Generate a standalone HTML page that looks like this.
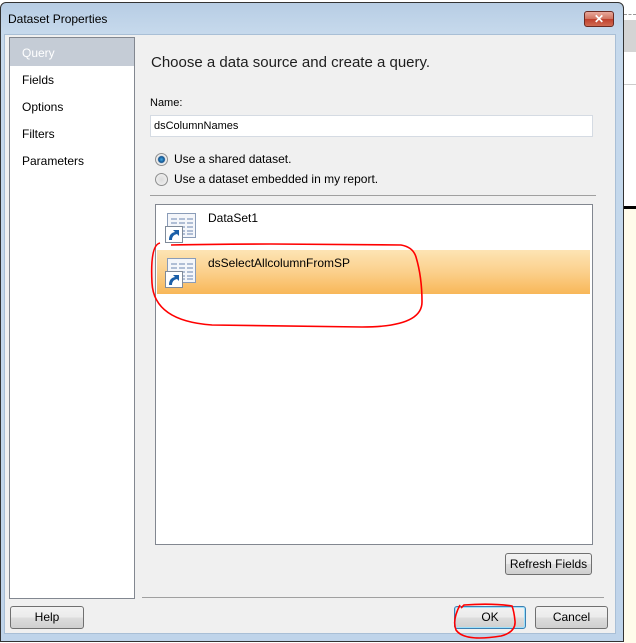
<!DOCTYPE html>
<html><head><style>
*{margin:0;padding:0;box-sizing:border-box}
body{width:636px;height:643px;overflow:hidden;background:#fff;font-family:"Liberation Sans",sans-serif;font-size:12px;color:#000;position:relative}
.a{position:absolute}
.btn{position:absolute;border:1px solid #707070;border-radius:3px;background:linear-gradient(#f2f2f2,#ebebeb 50%,#dddddd 51%,#cfcfcf);text-align:center;font-size:12px;line-height:20px}
</style></head><body>
<div class="a" style="left:624px;top:0;width:12px;height:643px;background:#fff"></div>
<div class="a" style="left:624px;top:14px;width:12px;height:1px;border-top:1px dashed #999"></div>
<div class="a" style="left:624px;top:20px;width:12px;height:32px;background:#d4d4d4"></div>
<div class="a" style="left:624px;top:84px;width:12px;height:1px;background:#ccc"></div>
<div class="a" style="left:624px;top:206px;width:12px;height:3px;background:#000"></div>
<div class="a" style="left:624px;top:209px;width:12px;height:434px;background:#fffbea"></div>
<div class="a" style="left:0;top:2px;width:624px;height:640px;background:linear-gradient(#b7cde4,#c6d9ec 30px,#bfd4ea);border:1px solid #333;border-radius:6px 6px 0 0"></div>
<div class="a" style="left:8px;top:12px;font-size:12px;color:#000">Dataset Properties</div>
<div class="a" style="left:584px;top:11px;width:30px;height:16px;border:1px solid #6b2a22;border-radius:3px;background:linear-gradient(#e9a99c,#d0725f 50%,#c0402c 51%,#cf6a52);color:#fff;font-size:12px;font-weight:bold;text-align:center;line-height:14px">✕</div>
<div class="a" style="left:4px;top:34px;width:612px;height:600px;background:#f0f0f0;border:1px solid #a9bfd6"></div>
<div class="a" style="left:9px;top:37px;width:126px;height:562px;background:#fff;border:1px solid #828790"></div>
<div class="a" style="left:10px;top:38px;width:124px;height:28px;background:#c5ccd6"></div>
<div class="a" style="left:22px;top:46px;color:#fff">Query</div>
<div class="a" style="left:22px;top:73px">Fields</div>
<div class="a" style="left:22px;top:100px">Options</div>
<div class="a" style="left:22px;top:127px">Filters</div>
<div class="a" style="left:22px;top:154px">Parameters</div>
<div class="a" style="left:151px;top:54px;font-size:15px;color:#1e1e1e">Choose a data source and create a query.</div>
<div class="a" style="left:150px;top:97px;font-size:11px">Name:</div>
<div class="a" style="left:150px;top:115px;width:443px;height:22px;background:#fff;border:1px solid #d5dbe3;padding:4px 3px;font-size:11px">dsColumnNames</div>
<div class="a" style="left:155px;top:153px;width:13px;height:13px;border-radius:50%;border:1px solid #8e8f8f;background:radial-gradient(#3fa9e6 0,#11508c 3px,#e9e9e9 4px,#f7f7f7)"></div>
<div class="a" style="left:174px;top:152px;font-size:12px">Use a shared dataset.</div>
<div class="a" style="left:155px;top:173px;width:13px;height:13px;border-radius:50%;border:1px solid #8e8f8f;background:radial-gradient(#dcdcdc,#f4f4f4)"></div>
<div class="a" style="left:174px;top:172px;font-size:12px">Use a dataset embedded in my report.</div>
<div class="a" style="left:150px;top:195px;width:446px;height:1px;background:#a0a0a0"></div>
<div class="a" style="left:155px;top:204px;width:438px;height:341px;background:#fff;border:1px solid #828790"></div>
<div class="a" style="left:157px;top:250px;width:433px;height:44px;background:linear-gradient(#fde4b4,#fbd08c 50%,#f8b758)"></div>
<svg class="a" style="left:0;top:0" width="636" height="643">
<g id="i1">
<rect x="167.5" y="213.5" width="28" height="24" fill="#f4f6fa" stroke="#8a9cb8"/>
<path d="M171 219h6M179 219h6M187 219h6M171 223h6M179 223h6M187 223h6M171 227h6M179 227h6M187 227h6M179 231h6M187 231h6M179 234h6M187 234h6" stroke="#6d86b0"/>
<rect x="165.5" y="226.5" width="17" height="16" fill="#fff" stroke="#7f8a99"/>
<path d="M169 240q0-7 6-8l-2-2h6v6l-2-2q-5 1-5 6z" fill="#1b5fa8"/>
</g>
<use href="#i1" transform="translate(0,45)"/>
</svg>
<div class="a" style="left:208px;top:211px;font-size:12px">DataSet1</div>
<div class="a" style="left:208px;top:256px;font-size:12px">dsSelectAllcolumnFromSP</div>
<div class="btn" style="left:505px;top:553px;width:87px;height:22px">Refresh Fields</div>
<div class="a" style="left:142px;top:597px;width:462px;height:1px;background:#a0a0a0"></div>
<div class="btn" style="left:10px;top:606px;width:74px;height:23px">Help</div>
<div class="btn" style="left:454px;top:606px;width:72px;height:23px;border-color:#3c7fb1;box-shadow:inset 0 0 0 1px #9de0fb">OK</div>
<div class="btn" style="left:535px;top:606px;width:73px;height:23px">Cancel</div>
<svg class="a" style="left:0;top:0" width="636" height="643" fill="none" stroke="#f00" stroke-width="1.6">
<path d="M160 243q-10 2-8 40 2 38 60 42l150 2q60 0 60-25 0-25-6-45-3-10-15-12l-130-1q-60 0-100 1"/>
<path d="M460 605q-8 15-4 25 8 12 45 6 15-4 14-15-1-10-3-15-20-3-48-1l-3 3"/>
</svg>
</body></html>
